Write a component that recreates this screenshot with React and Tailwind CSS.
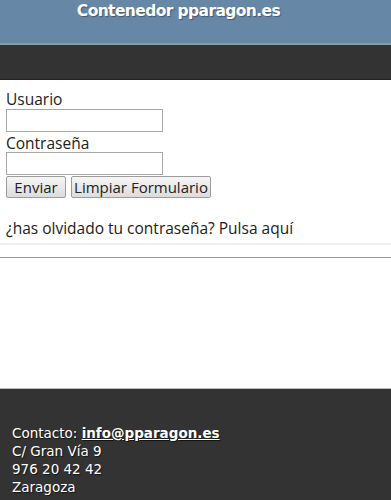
export default function App() {
  return (
    <div className="w-[391px] h-[500px] flex flex-col bg-white overflow-hidden font-['Open_Sans',sans-serif]">
      <header className="h-[43px] bg-[#6787a6] flex justify-center">
        <h1 className="ml-[-34px] pt-[1px] text-[15.5px] leading-[20px] tracking-[-0.6px] font-bold text-white font-['DejaVu_Sans',sans-serif] [text-shadow:1px_1px_1px_rgba(0,0,0,0.35)]">
          Contenedor pparagon.es
        </h1>
      </header>
      <div className="h-[2px] bg-[#8d9aa6]" />
      <nav className="h-[35px] bg-[#333333] border-b border-[#222]" />

      <main className="h-[308px] flex flex-col">
        <form className="px-[6px] pt-[10px] flex flex-col text-[15.5px] leading-[18px] text-[#222]">
          <label htmlFor="usuario">Usuario</label>
          <input id="usuario" type="text" className="mt-[1px] w-[157px] h-[23px] border border-[#a8a8a8] bg-white" />
          <label htmlFor="pass" className="mt-[2px]">Contraseña</label>
          <input id="pass" type="password" className="w-[157px] h-[23px] border border-[#a8a8a8] bg-white" />
          <div className="flex gap-[5px] mt-[1px]">
            <button type="button" className="w-[60px] h-[22px] border border-[#9c9c9c] rounded-[2px] bg-gradient-to-b from-[#f6f6f6] to-[#dcdcdc] text-[15px] leading-[20px] text-[#222]">
              Enviar
            </button>
            <button type="reset" className="w-[140px] h-[22px] border border-[#9c9c9c] rounded-[2px] bg-gradient-to-b from-[#f6f6f6] to-[#dcdcdc] text-[15px] leading-[20px] text-[#222]">
              Limpiar Formulario
            </button>
          </div>
        </form>
        <p className="px-[6px] mt-[20px] text-[15.5px] leading-[20px] text-[#222]">
          ¿has olvidado tu contraseña? <a href="#">Pulsa aquí</a>
        </p>
        <div className="mt-[5px] h-[2px] bg-[#efefef]" />
        <div className="mt-[12px] h-[1px] bg-[#9a9a9a]" />
      </main>

      <footer className="flex-1 bg-[#333333] border-t border-[#bdbdbd] px-[12px] pt-[35px] text-white text-[13.5px] leading-[18px] font-['DejaVu_Sans',sans-serif] [text-shadow:1px_1px_1px_rgba(0,0,0,0.6)]">
        <p>
          Contacto: <a href="mailto:info@pparagon.es" className="font-bold underline">info@pparagon.es</a>
        </p>
        <p>C/ Gran Vía 9</p>
        <p>976 20 42 42</p>
        <p>Zaragoza</p>
      </footer>
    </div>
  );
}
